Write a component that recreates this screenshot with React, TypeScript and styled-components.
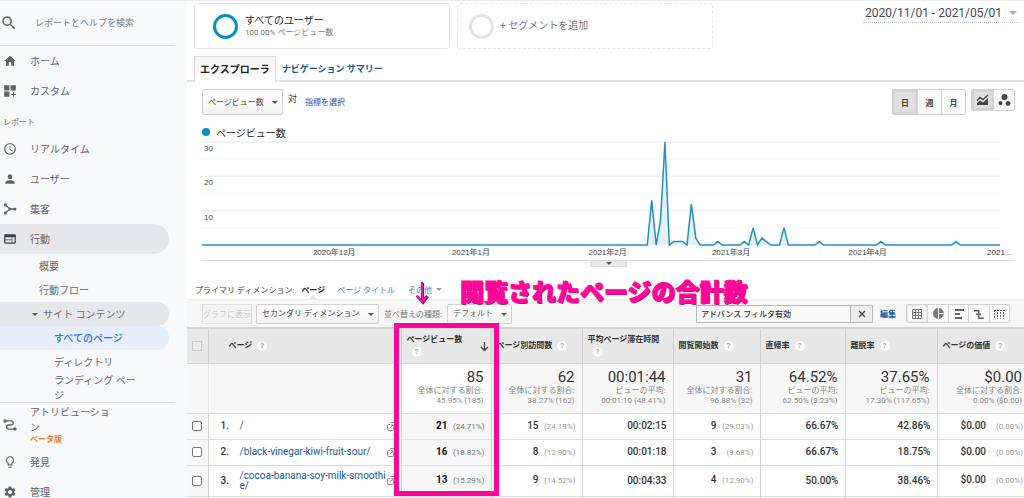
import React from 'react';
import styled, { createGlobalStyle, css } from 'styled-components';
import {
  MdSearch,
  MdHome,
  MdAccessTime,
  MdPerson,
  MdWeb,
  MdLightbulbOutline,
  MdSettings,
  MdPieChart,
} from 'react-icons/md';

const sans = `Roboto, "Noto Sans CJK JP", sans-serif`;
const pink = '#ff0599';
const blue = '#058dc7';
const link = '#15599f';

const GlobalStyle = createGlobalStyle`
  * { box-sizing: border-box; }
  body { margin: 0; background: #fff; font-family: ${sans}; color: #333; }
  button, input, select { font-family: inherit; margin: 0; }
  a { text-decoration: none; }
`;

const Shell = styled.div`
  display: flex;
  height: 100vh;
  overflow: hidden;
  border-top: 1px solid #e9eaec;
`;

/* ---------- sidebar ---------- */

const Sidebar = styled.nav`
  flex: 0 0 187px;
  background: #f8f9fb;
  color: #6a6d70;
`;

const SearchBar = styled.label`
  display: flex;
  align-items: center;
  height: 45px;
  gap: 17px;
  width: 175px;
  border-bottom: 1px solid #e3e4e6;
  color: #5f6368;
`;

const SearchInput = styled.input`
  border: 0;
  outline: 0;
  padding: 0;
  width: 130px;
  height: 20px;
  background: transparent;
  font-size: 9px;
  &::placeholder { color: #7a7d80; opacity: 1; }
`;

const NavItem = styled.a<{ $active?: boolean }>`
  display: flex;
  align-items: center;
  height: 30px;
  width: 169px;
  padding-left: 3px;
  gap: 13px;
  font-size: 10px;
  line-height: 15px;
  color: #5f6368;
  border-radius: 0 15px 15px 0;
  background: ${(p) => (p.$active ? '#e6e7ea' : 'transparent')};
  svg { flex: none; ${(p) => p.$active && css`color: #3c4043;`} }
`;

const NavHeading = styled.div`
  height: 28px;
  padding: 7px 0 0 3px;
  font-size: 8px;
  line-height: 20px;
`;

const SubItem = styled.a<{ $level: 1 | 2; $tone?: 'open' | 'current' }>`
  display: flex;
  align-items: center;
  height: 24px;
  width: 169px;
  padding-left: ${(p) => (p.$level === 1 ? 39 : 54)}px;
  font-size: 10px;
  line-height: 15px;
  color: #6a6d70;
  border-radius: 0 12px 12px 0;
  ${(p) => p.$tone === 'open' && css`background: #e6e7ea; padding-left: 32px; gap: 5px;`}
  ${(p) => p.$tone === 'current' && css`background: #e6eefb; color: #2f74e4; font-weight: 500;`}
`;

const WrappedItem = styled(SubItem)`
  height: 28px;
  width: 142px;
  word-break: break-all;
`;

const Divider = styled.hr`
  width: 175px;
  margin: 0;
  border: 0;
  border-top: 1px solid #dfe0e2;
`;

const Attribution = styled(NavItem)`
  height: 44px;
  width: 117px;
  line-height: 15px;
`;

const Beta = styled.span`
  display: block;
  font-size: 8px;
  line-height: 10px;
  font-weight: 700;
  color: #f0782a;
`;

/* ---------- main column ---------- */

const Main = styled.main`
  flex: 1;
  min-width: 0;
`;

const TopRow = styled.header`
  display: flex;
  align-items: flex-start;
  gap: 7px;
  padding: 2px 5px 0 7px;
`;

const Segment = styled.button<{ $empty?: boolean }>`
  display: flex;
  align-items: center;
  width: 256px;
  height: 46px;
  gap: ${(p) => (p.$empty ? 6 : 7)}px;
  padding: 0 0 0 ${(p) => (p.$empty ? 11 : 18)}px;
  border: 1px ${(p) => (p.$empty ? 'dashed' : 'solid')} #e4e4e4;
  border-radius: 3px;
  background: #fff;
  text-align: left;
  font-size: 10px;
  line-height: 14px;
  color: ${(p) => (p.$empty ? '#777' : '#222')};
`;

const Ring = styled.span<{ $empty?: boolean }>`
  width: 25px;
  height: 25px;
  border-radius: 50%;
  border: 3px solid ${(p) => (p.$empty ? '#e2e2e2' : blue)};
`;

const SegmentNote = styled.small`
  display: block;
  font-size: 8px;
  line-height: 10px;
  color: #777;
`;

const DateRange = styled.button`
  display: flex;
  align-items: center;
  gap: 7px;
  height: 20px;
  margin-left: auto;
  padding: 0 2px;
  border: 0;
  border-bottom: 1px dotted #c4c4c4;
  background: none;
  font-size: 12px;
  color: #3b4b5c;
`;

const Caret = styled.span<{ $size?: number; $color?: string }>`
  border: ${(p) => p.$size ?? 3}px solid transparent;
  border-top-color: ${(p) => p.$color ?? '#555'};
  border-bottom: 0;
`;

const Tabs = styled.div`
  display: flex;
  margin-top: 7px;
  padding-left: 7px;
  border-bottom: 2px solid #e2e2e2;
`;

const Tab = styled.button<{ $selected?: boolean }>`
  height: 26px;
  margin-bottom: -2px;
  padding: 0 6px 2px;
  border: 0;
  background: none;
  font-size: ${(p) => (p.$selected ? 10 : 9)}px;
  font-weight: 700;
  color: ${link};
  ${(p) => p.$selected && css`
    border: 1px solid #dcdcdc;
    border-bottom: 0;
    background: linear-gradient(#f4f4f4, #fff);
    color: #222;
    padding: 0 5px 2px;
  `}
`;

const ChartBar = styled.div`
  display: flex;
  align-items: flex-start;
  padding: 7px 9px 0 15px;
  gap: 5px;
  font-size: 9px;
  line-height: 20px;
`;

const Picker = styled.div<{ $w: number; $h: number; $muted?: boolean }>`
  position: relative;
  width: ${(p) => p.$w}px;
  height: ${(p) => p.$h}px;
  select {
    appearance: none;
    width: 100%;
    height: 100%;
    padding: 0 12px 0 5px;
    border: 1px solid #d2d2d2;
    border-radius: 2px;
    background: linear-gradient(#fff, #f3f3f3);
    font-size: 8px;
    color: ${(p) => (p.$muted ? '#666' : '#444')};
  }
  ${Caret} {
    position: absolute;
    right: 5px;
    top: calc(50% - 1px);
    pointer-events: none;
  }
`;

const MetricLink = styled.a`
  padding: 4px 0 0 3px;
  font-size: 8px;
  line-height: 19px;
  color: ${link};
`;

const Group = styled.div<{ $push?: boolean }>`
  display: flex;
  border: 1px solid #d2d2d2;
  border-radius: 2px;
  overflow: hidden;
  ${(p) => p.$push && css`margin-left: auto;`}
`;

const GroupButton = styled.button<{ $w: number; $h: number; $on?: boolean; $flat?: boolean }>`
  display: flex;
  align-items: center;
  justify-content: center;
  width: ${(p) => p.$w}px;
  height: ${(p) => p.$h}px;
  padding: 0;
  border: 0;
  background: ${(p) => (p.$on && !p.$flat ? '#e2e2e2' : '#fafafa')};
  box-shadow: ${(p) => (p.$on ? `inset 0 0 ${p.$flat ? 2 : 4}px #bbb` : 'none')};
  font-size: 8px;
  font-weight: 700;
  color: #444;
  & + & { border-left: 1px solid #d6d6d6; }
`;

const Legend = styled.div`
  display: flex;
  align-items: center;
  gap: 6px;
  height: 20px;
  margin-top: 7px;
  padding-left: 15px;
  font-size: 10px;
  color: #222;
  &::before {
    content: '';
    width: 8px;
    height: 8px;
    border-radius: 50%;
    background: ${blue};
  }
`;

const ChartArea = styled.section`
  margin: 0 10px 0 15px;
  padding-right: 14px;
  height: 119px;
  border-bottom: 1px solid #d8d8d8;
  font-family: "Liberation Sans", "Noto Sans CJK JP", sans-serif;
  font-size: 8px;
  line-height: 10px;
  color: #444;
`;

const Plot = styled.div`
  position: relative;
  height: 103px;
  svg { display: block; width: 100%; height: 100%; overflow: visible; }
`;

const YLabel = styled.span`
  position: absolute;
  left: 2px;
  margin-top: 2px;
`;

const XAxis = styled.div`
  position: relative;
`;

const XLabel = styled.span`
  position: absolute;
  top: 3px;
  transform: translateX(-50%);
  white-space: nowrap;
`;

const DrawerHandle = styled.button`
  display: flex;
  align-items: center;
  justify-content: center;
  width: 37px;
  height: 6px;
  margin: 0 auto;
  padding: 0;
  border: 1px solid #dcdcdc;
  border-top: 0;
  background: #e9e9e9;
`;

const HandleRow = styled.div`
  padding-left: 6px;
`;

const Dimensions = styled.div`
  position: relative;
  display: flex;
  align-items: center;
  height: 19px;
  margin-top: 13px;
  padding: 0 0 1px 8px;
  font-size: 8px;
  color: #444;
  a { color: #3c78d8; }
`;

const DimensionCurrent = styled.b`
  position: relative;
  margin: 0 12px 0 7px;
  color: #222;
  &::after {
    content: '';
    position: absolute;
    left: 8px;
    top: 11px;
    border: 4px solid transparent;
    border-top: 0;
    border-bottom-color: #e6e6e6;
  }
`;

const OtherDimensions = styled.a`
  display: flex;
  align-items: center;
  gap: 4px;
  margin-left: 13px;
`;

const Annotation = styled.div`
  position: absolute;
  left: 228px;
  top: -5px;
  display: flex;
  align-items: center;
  gap: 31px;
  z-index: 2;
  color: ${pink};
  font-size: 24px;
  line-height: 36px;
  font-weight: 900;
  white-space: nowrap;
  -webkit-text-stroke: 1px ${pink};
  text-shadow: 1px 1px 0 #7a1650;
  pointer-events: none;
`;

const Toolbar = styled.div`
  display: flex;
  align-items: center;
  height: 28px;
  padding: 0 14px 0 15px;
  background: #f6f6f6;
  border-top: 1px solid #ececec;
  font-size: 8px;
  color: #777;
`;

const PlotRows = styled.button`
  width: 50px;
  height: 20px;
  margin-right: 4px;
  padding: 0;
  border: 1px solid #e0e0e0;
  background: #f4f4f4;
  font-size: 8px;
  color: #c6c6c6;
`;

const SortLabel = styled.label`
  margin: 0 5px;
`;

const Filter = styled.div`
  display: flex;
  width: 177px;
  height: 18px;
  margin-left: auto;
  border: 1px solid #b9b9b9;
  input {
    flex: 1;
    min-width: 0;
    padding: 0 4px;
    border: 0;
    background: #fafafa;
    font-size: 8px;
    font-weight: 500;
    color: #333;
  }
  button {
    display: flex;
    align-items: center;
    justify-content: center;
    width: 22px;
    padding: 0;
    border: 0;
    border-left: 1px solid #b9b9b9;
    background: #ececec;
  }
`;

const EditLink = styled.a`
  margin: 0 10px 0 7px;
  font-size: 8px;
  font-weight: 700;
  color: ${link};
`;

/* ---------- data table ---------- */

const TableWrap = styled.div`
  position: relative;
`;

const Highlight = styled.div`
  position: absolute;
  top: -4px;
  right: 525px;
  width: 105px;
  height: 173px;
  border: 5px solid ${pink};
  pointer-events: none;
`;

const Table = styled.table`
  width: 100%;
  table-layout: fixed;
  border-collapse: collapse;
  font-size: 10px;
  line-height: 12px;
  th, td { padding: 0; }
`;

const HeadCell = styled.th<{ $first?: boolean }>`
  position: relative;
  height: 35px;
  border-top: 2px solid #d4d4d4;
  border-bottom: 1px solid #d4d4d4;
  border-left: ${(p) => (p.$first ? '0' : '1px solid #cdcdcd')};
  background: #e8e8e8;
  font-size: 8px;
  font-weight: 700;
  color: #333;
  text-align: left;
  white-space: nowrap;
`;

const HeadLabel = styled.div<{ $wrap?: boolean; $indent?: number }>`
  display: flex;
  flex-direction: ${(p) => (p.$wrap ? 'column' : 'row')};
  align-items: ${(p) => (p.$wrap ? 'flex-start' : 'center')};
  gap: ${(p) => (p.$wrap ? 1 : 5)}px;
  padding-left: ${(p) => p.$indent ?? 5}px;
`;

const Help = styled.span`
  display: inline-flex;
  align-items: center;
  justify-content: center;
  width: 10px;
  height: 10px;
  border-radius: 50%;
  background: #fdfdfd;
  font-size: 8px;
  line-height: 10px;
  color: #aaa;
`;

const HelpInset = styled(Help)`
  margin-left: 5px;
`;

const SortArrow = styled.svg`
  position: absolute;
  right: 2px;
  top: 12px;
`;

const SummaryCell = styled.td<{ $sorted?: boolean; $last?: boolean; $plain?: boolean }>`
  height: 50px;
  border-left: 1px solid ${(p) => (p.$plain ? '#e4e4e4' : '#d6d6d6')};
  border-bottom: 1px solid #dedede;
  background: ${(p) => (p.$sorted ? '#fff' : '#f7f7f7')};
  && { padding: 0 ${(p) => (p.$last ? 2 : 7)}px 1px 0; }
  text-align: right;
  font-size: 8px;
  line-height: 10px;
  color: #888;
  white-space: nowrap;
  strong {
    display: block;
    font-size: 15px;
    line-height: 17px;
    font-weight: 400;
    color: #333;
  }
`;

const CheckCell = styled.td`
  border-bottom: 1px solid #dedede;
  background: #f7f7f7;
  text-align: center;
  vertical-align: middle;
`;

const Check = styled.input`
  appearance: none;
  display: block;
  width: 10px;
  height: 10px;
  margin: 0 auto;
  border: 1px solid #777;
  border-radius: 2px;
  background: #fff;
  &:disabled { border-color: #c8c8c8; background: #ececec; border-radius: 0; }
`;

const PageCell = styled.td`
  border-left: 1px solid #d6d6d6;
  border-bottom: 1px solid #dedede;
`;

const PageRow = styled.div<{ $tall?: boolean }>`
  display: flex;
  align-items: center;
  height: ${(p) => (p.$tall ? 30 : 25)}px;
  padding: 0 5px 0 12px;
  font-weight: 500;
  color: #333;
  line-height: 10px;
  span { width: 19px; }
  a { flex: 1; min-width: 0; font-weight: 400; color: ${link}; word-break: break-all; }
  svg { flex: none; }
`;

const ValueCell = styled.td<{ $sorted?: boolean; $last?: boolean }>`
  border-left: 1px solid #d6d6d6;
  border-bottom: 1px solid #dedede;
  background: ${(p) => (p.$sorted ? '#f7f7f7' : '#fff')};
  && { padding-right: ${(p) => (p.$last ? 1 : 6)}px; }
  text-align: right;
  font-weight: ${(p) => (p.$sorted ? 700 : 500)};
  color: ${(p) => (p.$sorted ? '#111' : '#333')};
  white-space: nowrap;
`;

const Share = styled.small<{ $strong?: boolean }>`
  display: inline-block;
  width: 37px;
  font-size: 8px;
  font-weight: 400;
  color: ${(p) => (p.$strong ? '#777' : '#999')};
`;

/* ---------- data ---------- */

const DAYS = 181;
const views: Record<number, number> = {
  102: 13, 104: 7, 105: 30, 107: 1, 108: 1, 109: 1, 111: 12, 112: 2, 117: 1,
  123: 1, 125: 5, 127: 2, 128: 1, 132: 5, 140: 1, 154: 1, 171: 1,
};
const line = Array.from({ length: DAYS + 1 }, (_, d) => `${d},${30 - (views[d] ?? 0)}`).join(' ');

const months = [
  { day: 30, text: '2020年12月' },
  { day: 61, text: '2021年1月' },
  { day: 92, text: '2021年2月' },
  { day: 120, text: '2021年3月' },
  { day: 151, text: '2021年4月' },
  { day: 181, text: '2021…' },
];

const metrics = [
  { name: 'ページビュー数', width: 90, wrap: true, total: '85', note: '全体に対する割合:', base: '45.95% (185)' },
  { name: 'ページ別訪問数', width: 91, total: '62', note: '全体に対する割合:', base: '38.27% (162)' },
  { name: '平均ページ滞在時間', width: 91, wrap: true, total: '00:01:44', note: 'ビューの平均:', base: '00:01:10 (48.41%)' },
  { name: '閲覧開始数', width: 87, total: '31', note: '全体に対する割合:', base: '96.88% (32)' },
  { name: '直帰率', width: 85, total: '64.52%', note: 'ビューの平均:', base: '62.50% (3.23%)' },
  { name: '離脱率', width: 92, total: '37.65%', note: 'ビューの平均:', base: '17.30% (117.65%)' },
  { name: 'ページの価値', width: 87, total: '$0.00', note: '全体に対する割合:', base: '0.00% ($0.00)' },
];

const rows: { page: string; tall?: boolean; values: [string, string?][] }[] = [
  { page: '/', values: [['21', '(24.71%)'], ['15', '(24.19%)'], ['00:02:15'], ['9', '(29.03%)'], ['66.67%'], ['42.86%'], ['$0.00', '(0.00%)']] },
  { page: '/black-vinegar-kiwi-fruit-sour/', values: [['16', '(18.82%)'], ['8', '(12.90%)'], ['00:01:18'], ['3', '(9.68%)'], ['66.67%'], ['18.75%'], ['$0.00', '(0.00%)']] },
  { page: '/cocoa-banana-soy-milk-smoothie/', tall: true, values: [['13', '(15.29%)'], ['9', '(14.52%)'], ['00:04:33'], ['4', '(12.90%)'], ['50.00%'], ['38.46%'], ['$0.00', '(0.00%)']] },
];

/* ---------- icons ---------- */

const CustomIcon = () => (
  <svg width="14" height="14" viewBox="0 0 24 24" fill="currentColor">
    <path d="M2 2h9v9H2zM13 2h9v9h-9zM2 13h9v9H2zM17 14h2v3h3v2h-3v3h-2v-3h-3v-2h3z" />
  </svg>
);

const AcquisitionIcon = () => (
  <svg width="14" height="14" viewBox="0 0 24 24" fill="none" stroke="currentColor" strokeWidth="2.4">
    <path d="M4 5l8 7-8 7M12 12h7" />
    <g fill="currentColor" stroke="none">
      <circle cx="4" cy="5" r="2.7" />
      <circle cx="4" cy="19" r="2.7" />
      <circle cx="12" cy="12" r="2.4" />
      <circle cx="20.5" cy="12" r="2.7" />
    </g>
  </svg>
);

const AttributionIcon = () => (
  <svg width="14" height="14" viewBox="0 0 24 24" fill="none" stroke="currentColor" strokeWidth="2.4">
    <path d="M4 5h10a3.5 3.5 0 0 1 0 7h-4a3.5 3.5 0 0 0 0 7h10" />
    <g fill="currentColor" stroke="none">
      <circle cx="3.5" cy="5" r="3" />
      <circle cx="20.5" cy="19" r="3" />
    </g>
  </svg>
);

const LineChartIcon = () => (
  <svg width="13" height="12" viewBox="0 0 13 12">
    <path d="M1 6.5l3-3 3 2L12 1" fill="none" stroke="#444" strokeWidth="1.5" />
    <path d="M1 11V9l3-2.500 3 2L12 4v7z" fill="#444" />
  </svg>
);

const MotionChartIcon = () => (
  <svg width="13" height="12" viewBox="0 0 13 12" fill="#444">
    <circle cx="6.5" cy="3" r="3" />
    <circle cx="2.5" cy="9" r="2" />
    <circle cx="10" cy="9.5" r="2.4" />
  </svg>
);

const ExternalIcon = () => (
  <svg width="9" height="9" viewBox="0 0 9 9" fill="none" stroke="#888">
    <path d="M3 2.5H1.500a1 1 0 0 0-1 1v4a1 1 0 0 0 1 1h4a1 1 0 0 0 1-1V6" />
    <path d="M3.500 .5h5v5h-2M3 6l3-3M4 2.800h2.200V5" />
  </svg>
);

const GridIcon = () => (
  <svg width="12" height="12" viewBox="0 0 12 12" fill="none" stroke="#777">
    <path d="M1.500 1.500h9v9h-9zM4.500 1.500v9M7.500 1.500v9M1.500 4.500h9M1.500 7.500h9" />
  </svg>
);

const BarsIcon = () => (
  <svg width="12" height="12" viewBox="0 0 12 12" fill="#666">
    <path d="M2 1h9v2H2zM2 5h5v2H2zM2 9h7v2H2z" />
  </svg>
);

const CompareIcon = () => (
  <svg width="12" height="12" viewBox="0 0 12 12" fill="#666">
    <path d="M1 2h5v1.500H1zM5 2h1.500v9H5zM3 5.500h5V7H3zM6 9.500h5V11H6z" />
  </svg>
);

const PivotIcon = () => (
  <svg width="13" height="12" viewBox="0 0 13 12" fill="none" stroke="#777">
    <path d="M1 2.500h11" strokeDasharray="2 1" />
    <path d="M1.500 2v9M4.500 4v7M7.500 4v7M10.500 4v7" strokeDasharray="2 1" />
  </svg>
);

const ArrowDown = () => (
  <svg width="14" height="24" viewBox="0 0 14 24" fill="none" strokeWidth="2.2">
    <path d="M8 2v20M2.500 15.500L8 22l5-6.500" stroke="#7a1650" />
    <path d="M7 1v20M1.500 14.500L7 21l5-6.500" stroke={pink} />
  </svg>
);

/* ---------- page ---------- */

export default function App() {
  return (
    <Shell>
      <GlobalStyle />
      <Sidebar>
        <SearchBar>
          <MdSearch size={18} />
          <SearchInput aria-label="検索" placeholder="レポートとヘルプを検索" />
        </SearchBar>
        <NavItem href="#home"><MdHome size={14} />ホーム</NavItem>
        <NavItem href="#custom"><CustomIcon />カスタム</NavItem>
        <NavHeading>レポート</NavHeading>
        <NavItem href="#realtime"><MdAccessTime size={14} />リアルタイム</NavItem>
        <NavItem href="#users"><MdPerson size={14} />ユーザー</NavItem>
        <NavItem href="#acquisition"><AcquisitionIcon />集客</NavItem>
        <NavItem href="#behavior" $active><MdWeb size={14} />行動</NavItem>
        <SubItem href="#overview" $level={1}>概要</SubItem>
        <SubItem href="#flow" $level={1}>行動フロー</SubItem>
        <SubItem href="#content" $level={1} $tone="open"><Caret />サイト コンテンツ</SubItem>
        <SubItem href="#pages" $level={2} $tone="current">すべてのページ</SubItem>
        <SubItem href="#directory" $level={2}>ディレクトリ</SubItem>
        <WrappedItem href="#landing" $level={2}>ランディング ページ</WrappedItem>
        <Divider />
        <Attribution href="#attribution">
          <AttributionIcon />
          <span>アトリビューション<Beta>ベータ版</Beta></span>
        </Attribution>
        <NavItem href="#discover"><MdLightbulbOutline size={14} />発見</NavItem>
        <NavItem href="#admin"><MdSettings size={14} />管理</NavItem>
      </Sidebar>

      <Main>
        <TopRow>
          <Segment>
            <Ring />
            <span>すべてのユーザー<SegmentNote>100.00% ページビュー数</SegmentNote></span>
          </Segment>
          <Segment $empty><Ring $empty />+ セグメントを追加</Segment>
          <DateRange>2020/11/01 - 2021/05/01<Caret $size={4} $color="#aaa" /></DateRange>
        </TopRow>

        <Tabs role="tablist">
          <Tab role="tab" $selected>エクスプローラ</Tab>
          <Tab role="tab">ナビゲーション サマリー</Tab>
        </Tabs>

        <ChartBar>
          <Picker $w={81} $h={26}>
            <select aria-label="指標"><option>ページビュー数</option></select>
            <Caret />
          </Picker>
          対
          <MetricLink href="#metric">指標を選択</MetricLink>
          <Group $push>
            <GroupButton $w={24} $h={24} $on>日</GroupButton>
            <GroupButton $w={24} $h={24}>週</GroupButton>
            <GroupButton $w={24} $h={24}>月</GroupButton>
          </Group>
          <Group>
            <GroupButton $w={21} $h={20} $on aria-label="折れ線グラフ"><LineChartIcon /></GroupButton>
            <GroupButton $w={21} $h={20} aria-label="モーション グラフ"><MotionChartIcon /></GroupButton>
          </Group>
        </ChartBar>

        <Legend>ページビュー数</Legend>
        <ChartArea>
          <Plot>
            <svg viewBox="0 0 181 30" preserveAspectRatio="none">
              {[0, 5, 10, 15, 20, 25].map((y) => (
                <path key={y} d={`M0 ${y}H181`} stroke={y % 10 ? '#f7f7f7' : '#ededed'} vectorEffect="non-scaling-stroke" />
              ))}
              <polygon points={`0,30 ${line} 181,30`} fill="#e6f1f9" />
              <polyline points={line} fill="none" stroke="#2090ca" strokeWidth="1.5" vectorEffect="non-scaling-stroke" />
            </svg>
            {[30, 20, 10].map((v) => (
              <YLabel key={v} style={{ top: `${((30 - v) / 30) * 100}%` }}>{v}</YLabel>
            ))}
          </Plot>
          <XAxis>
            {months.map((m) => (
              <XLabel key={m.day} style={{ left: `${(m.day / DAYS) * 100}%` }}>{m.text}</XLabel>
            ))}
          </XAxis>
        </ChartArea>
        <HandleRow>
          <DrawerHandle aria-label="注釈"><Caret /></DrawerHandle>
        </HandleRow>

        <Dimensions>
          プライマリ ディメンション:
          <DimensionCurrent>ページ</DimensionCurrent>
          <a href="#title">ページ タイトル</a>
          <OtherDimensions href="#other">その他<Caret $color="#999" /></OtherDimensions>
          <Annotation><ArrowDown />閲覧されたページの合計数</Annotation>
        </Dimensions>

        <Toolbar>
          <PlotRows disabled>グラフに表示</PlotRows>
          <Picker $w={123} $h={20}>
            <select aria-label="セカンダリ ディメンション"><option>セカンダリ ディメンション</option></select>
            <Caret />
          </Picker>
          <SortLabel htmlFor="sort">並べ替えの種類:</SortLabel>
          <Picker $w={65} $h={20} $muted>
            <select id="sort"><option>デフォルト</option></select>
            <Caret />
          </Picker>
          <Filter>
            <input aria-label="フィルタ" defaultValue="アドバンス フィルタ有効" />
            <button aria-label="クリア">
              <svg width="8" height="8" viewBox="0 0 8 8" stroke="#444" strokeWidth="1.4"><path d="M1 1l6 6M7 1L1 7" /></svg>
            </button>
          </Filter>
          <EditLink href="#edit">編集</EditLink>
          <Group>
            <GroupButton $w={20} $h={17} $on $flat aria-label="表"><GridIcon /></GroupButton>
            <GroupButton $w={21} $h={17} aria-label="円グラフ"><MdPieChart size={13} color="#777" /></GroupButton>
            <GroupButton $w={20} $h={17} aria-label="棒グラフ"><BarsIcon /></GroupButton>
            <GroupButton $w={21} $h={17} aria-label="比較"><CompareIcon /></GroupButton>
            <GroupButton $w={20} $h={17} aria-label="ピボット"><PivotIcon /></GroupButton>
          </Group>
        </Toolbar>

        <TableWrap>
          <Table>
            <colgroup>
              <col style={{ width: 21 }} />
              <col />
              {metrics.map((m) => <col key={m.name} style={{ width: m.width }} />)}
            </colgroup>
            <thead>
              <tr>
                <HeadCell $first><Check type="checkbox" disabled aria-label="すべて選択" /></HeadCell>
                <HeadCell><HeadLabel $indent={20}>ページ<Help>?</Help></HeadLabel></HeadCell>
                {metrics.map((m, i) => (
                  <HeadCell key={m.name}>
                    <HeadLabel $wrap={m.wrap}>
                      {m.name}
                      {m.wrap ? <HelpInset>?</HelpInset> : <Help>?</Help>}
                    </HeadLabel>
                    {i === 0 && (
                      <SortArrow width="9" height="11" viewBox="0 0 9 11" fill="none" stroke="#444" strokeWidth="1.3">
                        <path d="M4.500 1v8.500M1 6l3.500 3.500L8 6" />
                      </SortArrow>
                    )}
                  </HeadCell>
                ))}
              </tr>
            </thead>
            <tbody>
              <tr>
                <CheckCell />
                <SummaryCell $plain />
                {metrics.map((m, i) => (
                  <SummaryCell key={m.name} $sorted={i === 0} $last={i === 6}>
                    <strong>{m.total}</strong>
                    {m.note}<br />{m.base}
                  </SummaryCell>
                ))}
              </tr>
              {rows.map((r, n) => (
                <tr key={r.page}>
                  <CheckCell><Check type="checkbox" aria-label={r.page} /></CheckCell>
                  <PageCell>
                    <PageRow $tall={r.tall}>
                      <span>{n + 1}.</span>
                      <a href="#page">{r.page}</a>
                      <ExternalIcon />
                    </PageRow>
                  </PageCell>
                  {r.values.map(([value, share], i) => (
                    <ValueCell key={i} $sorted={i === 0} $last={i === 6}>
                      {value}
                      {share && <Share $strong={i === 0}>{share}</Share>}
                    </ValueCell>
                  ))}
                </tr>
              ))}
              <tr>
                <CheckCell>&nbsp;</CheckCell>
                <PageCell />
                {metrics.map((m, i) => <ValueCell key={m.name} $sorted={i === 0} />)}
              </tr>
            </tbody>
          </Table>
          <Highlight />
        </TableWrap>
      </Main>
    </Shell>
  );
}
